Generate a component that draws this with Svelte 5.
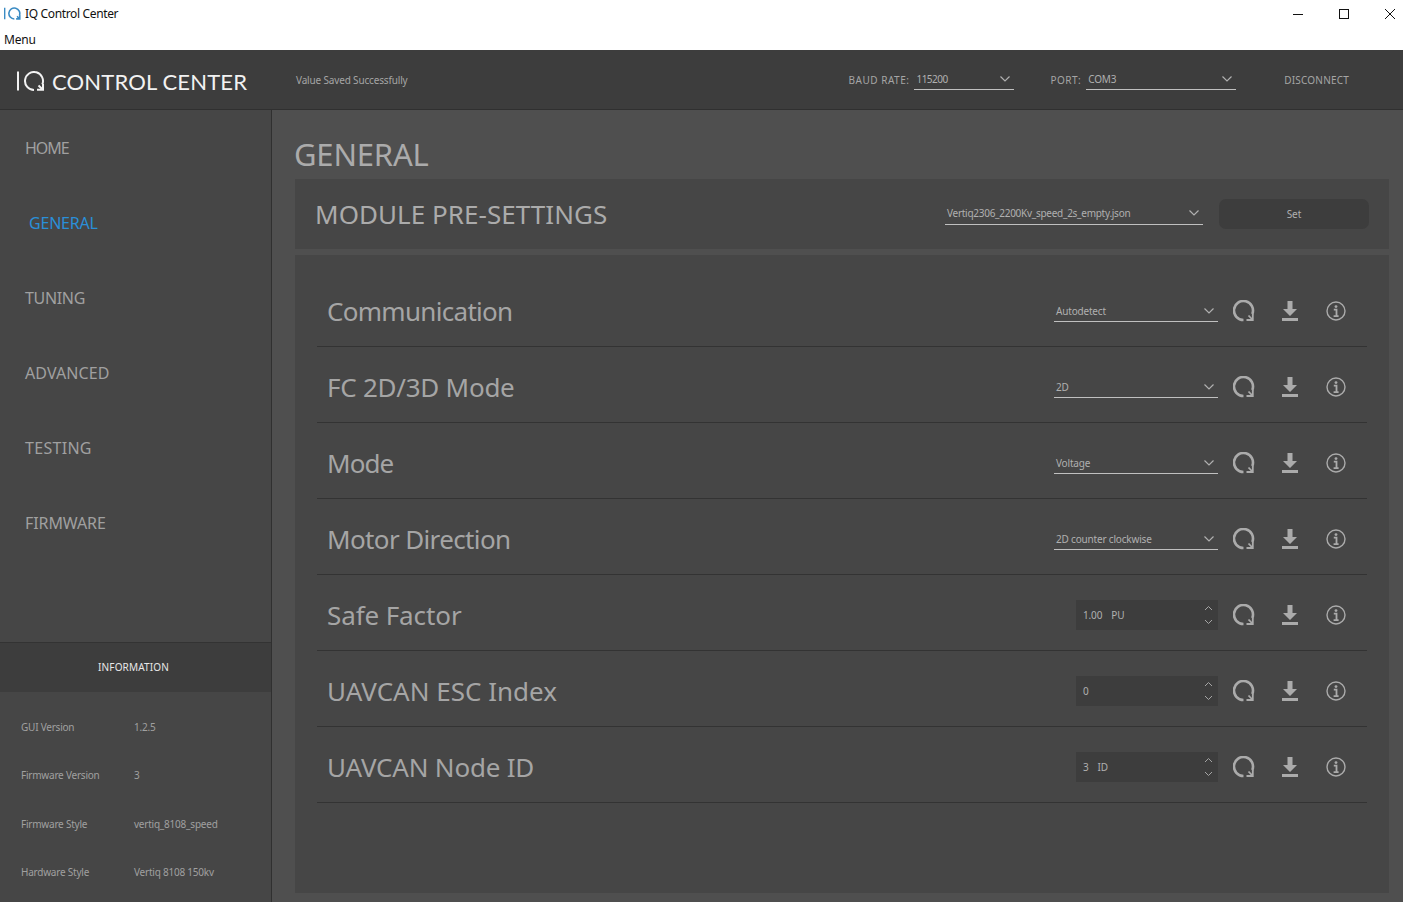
<script>
    // tracking values keep the label widths in line with the original UI font
    const navItems = [
        { name: "HOME", track: -1 },
        { name: "GENERAL", track: -0.2 },
        { name: "TUNING", track: -0.33 },
        { name: "ADVANCED", track: 0.1 },
        { name: "TESTING", track: 0.3 },
        { name: "FIRMWARE", track: -0.1 }
    ];
    const info = [
        ["GUI Version", "1.2.5"],
        ["Firmware Version", "3"],
        ["Firmware Style", "vertiq_8108_speed"],
        ["Hardware Style", "Vertiq 8108 150kv"]
    ];
    const rows = [
        { label: "Communication", track: -0.7, kind: "select", value: "Autodetect" },
        { label: "FC 2D/3D Mode", track: -0.25, kind: "select", value: "2D" },
        { label: "Mode", track: -0.9, kind: "select", value: "Voltage" },
        { label: "Motor Direction", track: -0.63, kind: "select", value: "2D counter clockwise" },
        { label: "Safe Factor", track: -0.1, kind: "spin", value: "1.00", unit: "PU" },
        { label: "UAVCAN ESC Index", track: 0, kind: "spin", value: "0" },
        { label: "UAVCAN Node ID", track: -0.2, kind: "spin", value: "3", unit: "ID" }
    ];
</script>

{#snippet chevron()}
    <svg class="chevron" width="12" height="8" viewBox="0 0 12 8"><path d="M1.5 1.5 L6 6 L10.5 1.5" /></svg>
{/snippet}

{#snippet logo(w, h)}
    <svg width={w} height={h} viewBox="0 0 28 20">
        <path d="M1 0.5 V19.5" />
        <path d="M17 19 A9 9 0 1 1 25.3 13.5" />
        <path d="M21.5 14.5 L26 18.8 M26 13 V18.8 H20" />
    </svg>
{/snippet}

<div class="window">
    <div class="titlebar">
        <span class="title-logo">{@render logo(17, 13)}</span>
        <span class="title-text">IQ Control Center</span>
        <div class="window-buttons">
            <svg width="12" height="12" viewBox="0 0 12 12"><path d="M1 6.5 H11" /></svg>
            <svg width="12" height="12" viewBox="0 0 12 12"><rect x="1.5" y="1.5" width="9" height="9" /></svg>
            <svg width="12" height="12" viewBox="0 0 12 12"><path d="M1 1 L11 11 M11 1 L1 11" /></svg>
        </div>
    </div>
    <div class="menubar">Menu</div>

    <header class="topbar">
        <div class="brand">
            <span class="brand-logo">{@render logo(28, 20)}</span>
            <span class="brand-text">CONTROL CENTER</span>
        </div>
        <div class="status">Value Saved Successfully</div>
        <div class="conn">
            <span class="conn-label baud">BAUD RATE:</span>
            <div class="select baud-select"><span>115200</span>{@render chevron()}</div>
            <span class="conn-label port">PORT:</span>
            <div class="select port-select"><span>COM3</span>{@render chevron()}</div>
            <span class="disconnect">DISCONNECT</span>
        </div>
    </header>

    <div class="body">
        <aside class="sidebar">
            <nav class="nav">
                {#each navItems as item}
                    <div class="nav-item" class:active={item.name === "GENERAL"} style="letter-spacing: {item.track}px">{item.name}</div>
                {/each}
            </nav>
            <div class="info-head">INFORMATION</div>
            <div class="info-list">
                {#each info as [k, v]}
                    <div class="info-row"><span class="info-key">{k}</span><span>{v}</span></div>
                {/each}
            </div>
        </aside>

        <main class="main">
            <h1>GENERAL</h1>
            <section class="presets">
                <h2>MODULE PRE-SETTINGS</h2>
                <div class="select preset-select"><span>Vertiq2306_2200Kv_speed_2s_empty.json</span>{@render chevron()}</div>
                <div class="set-btn">Set</div>
            </section>
            <section class="panel">
                {#each rows as row}
                    <div class="row">
                        <div class="row-label" style="letter-spacing: {row.track}px">{row.label}</div>
                        {#if row.kind === "select"}
                            <div class="select row-select"><span>{row.value}</span>{@render chevron()}</div>
                        {:else}
                            <div class="spin">
                                <span class="spin-value">{row.value}</span>
                                {#if row.unit}<span class="spin-unit">{row.unit}</span>{/if}
                                <div class="spin-arrows">
                                    <svg width="9" height="6" viewBox="0 0 9 6"><path d="M1 5 L4.5 1.5 L8 5" /></svg>
                                    <svg width="9" height="6" viewBox="0 0 9 6"><path d="M1 1 L4.5 4.5 L8 1" /></svg>
                                </div>
                            </div>
                        {/if}
                        <div class="actions">
                            <svg class="act" width="22" height="22" viewBox="0 0 22 22">
                                <path class="thick" d="M10.5 20 A9.5 9.5 0 1 1 19.3 14" />
                                <path class="mid" d="M15.5 15.5 L19.8 20 M19.8 14 V20 H13.5" />
                            </svg>
                            <svg class="act" width="18" height="22" viewBox="0 0 18 22">
                                <path class="solid" d="M6.5 1 H11.5 V9 H16 L9 16 L2 9 H6.5 Z" />
                                <rect class="solid" x="1" y="18" width="16" height="3" />
                            </svg>
                            <svg class="act" width="20" height="20" viewBox="0 0 20 20">
                                <circle cx="10" cy="10" r="9" />
                                <circle class="solid" cx="10" cy="5.6" r="1.4" />
                                <path class="mid" d="M7.8 8.6 H10.5 V15 M7.6 15.2 H12.6" />
                            </svg>
                        </div>
                    </div>
                {/each}
            </section>
        </main>
    </div>
</div>

<style>
    :global(body) {
        margin: 0;
        background: #4f4f4f;
    }

    .window {
        width: 1403px;
        height: 902px;
        overflow: hidden;
        display: flex;
        flex-direction: column;
        font-family: "Noto Sans", "Open Sans", sans-serif;
        color: #ababab;
    }

    .titlebar {
        height: 26px;
        background: #fff;
        display: flex;
        align-items: center;
        padding-left: 4px;
        color: #111;
        font-size: 12px;
    }

    .title-logo {
        display: flex;
        margin-right: 4px;
        padding-top: 1px;
    }

    .title-logo svg {
        fill: none;
        stroke: #3b8cc4;
        stroke-width: 2.6;
    }

    .title-text {
        letter-spacing: -0.35px;
    }

    .window-buttons {
        margin-left: auto;
        display: flex;
        gap: 34px;
        margin-right: 7px;
        padding-top: 1px;
    }

    .window-buttons svg {
        fill: none;
        stroke: #111;
        stroke-width: 1;
    }

    .menubar {
        height: 24px;
        background: #fff;
        color: #111;
        font-size: 12px;
        padding-left: 4px;
        line-height: 27px;
        letter-spacing: -0.2px;
    }

    .topbar {
        height: 59px;
        background: #3d3d3d;
        border-bottom: 1px solid #303030;
        display: flex;
        align-items: center;
        flex: none;
    }

    .brand {
        width: 296px;
        padding-left: 17px;
        box-sizing: border-box;
        display: flex;
        align-items: center;
        color: #f2f2f2;
    }

    .brand-logo {
        display: flex;
        margin-right: 7px;
        margin-top: 2px;
    }

    .brand-logo svg {
        fill: none;
        stroke: #f2f2f2;
        stroke-width: 2;
    }

    .brand-text {
        font-family: Lato, sans-serif;
        font-size: 22px;
        padding-top: 3px;
        letter-spacing: 0.15px;
    }

    .status {
        font-size: 10px;
        color: #a5a5a5;
        letter-spacing: -0.16px;
    }

    .conn {
        margin-left: auto;
        display: flex;
        align-items: center;
        font-size: 10px;
        color: #a5a5a5;
    }

    .conn-label {
        letter-spacing: 0.5px;
    }

    .conn-label.baud {
        margin-right: 5px;
    }

    .conn-label.port {
        margin-left: 36px;
        margin-right: 5px;
    }

    .disconnect {
        margin-left: 48px;
        margin-right: 54px;
        letter-spacing: 0.2px;
    }

    .select {
        display: flex;
        align-items: center;
        justify-content: space-between;
        border-bottom: 1px solid #c0c0c0;
        box-sizing: border-box;
        font-size: 10px;
        color: #b0b0b0;
        padding: 0 3px 0 2px;
    }

    .select span {
        letter-spacing: -0.18px;
    }

    .chevron {
        fill: none;
        stroke: #b0b0b0;
        stroke-width: 1.2;
    }

    .baud-select {
        width: 100px;
        height: 20px;
    }

    .baud-select span {
        letter-spacing: -0.5px;
    }

    .port-select {
        width: 150px;
        height: 20px;
    }

    .body {
        flex: 1;
        display: flex;
        min-height: 0;
    }

    .sidebar {
        width: 271px;
        flex: none;
        background: #464646;
        border-right: 1px solid #303030;
        display: flex;
        flex-direction: column;
    }

    .nav {
        flex: 1;
        padding-top: 1px;
    }

    .nav-item {
        height: 75px;
        line-height: 75px;
        padding-left: 25px;
        font-size: 16px;
        color: #a0a0a0;
    }

    .nav-item.active {
        color: #2a8fd8;
        padding-left: 29px;
    }

    .info-head {
        height: 49px;
        background: #3d3d3d;
        border-top: 1px solid #333;
        text-align: center;
        line-height: 49px;
        font-size: 10px;
        color: #e8e8e8;
        padding-right: 4px;
        letter-spacing: 0.15px;
    }

    .info-list {
        height: 210px;
        padding-top: 10.4px;
        box-sizing: border-box;
    }

    .info-row {
        height: 48.6px;
        display: flex;
        align-items: center;
        padding-left: 21px;
        font-size: 10px;
        color: #a0a0a0;
        letter-spacing: -0.22px;
    }

    .info-key {
        width: 113px;
    }

    .main {
        flex: 1;
        padding: 0 14px 9px 23px;
        display: flex;
        flex-direction: column;
        min-width: 0;
    }

    h1 {
        margin: 0 0 0 -1px;
        height: 69px;
        line-height: 88px;
        font-size: 31px;
        font-weight: 400;
        color: #ababab;
        flex: none;
        letter-spacing: -0.2px;
    }

    .presets {
        height: 70px;
        background: #464646;
        display: flex;
        align-items: center;
        padding: 0 20px;
        margin-bottom: 6px;
        flex: none;
    }

    h2 {
        margin: 0;
        font-size: 26px;
        font-weight: 400;
        color: #ababab;
        margin-right: auto;
        letter-spacing: 0.05px;
    }

    .preset-select {
        width: 258px;
        height: 22px;
        margin-right: 16px;
        padding-bottom: 2px;
    }

    .preset-select span {
        letter-spacing: -0.27px;
    }

    .set-btn {
        width: 150px;
        height: 30px;
        line-height: 30px;
        background: #3d3d3d;
        border-radius: 7px;
        text-align: center;
        font-size: 10px;
        color: #b0b0b0;
    }

    .panel {
        flex: 1;
        background: #464646;
        padding: 16px 22px 0;
    }

    .row {
        height: 70px;
        border-bottom: 1px solid #333;
        display: flex;
        align-items: center;
        padding: 5px 0 0 10px;
    }

    .row-label {
        font-size: 26px;
        color: #a5a5a5;
        margin-right: auto;
    }

    .row-select {
        width: 164px;
        height: 22px;
    }

    .spin {
        width: 142px;
        height: 30px;
        background: #3d3d3d;
        display: flex;
        align-items: center;
        padding: 0 5px 0 7px;
        box-sizing: border-box;
        font-size: 10px;
        color: #b0b0b0;
        letter-spacing: -0.15px;
    }

    .spin-unit {
        margin-left: 9px;
    }

    .spin-arrows {
        margin-left: auto;
        display: flex;
        flex-direction: column;
        gap: 8px;
    }

    .spin-arrows svg {
        fill: none;
        stroke: #a5a5a5;
        stroke-width: 1;
    }

    .actions {
        width: 149px;
        display: flex;
        align-items: center;
    }

    .act {
        fill: none;
        stroke: #ababab;
        stroke-width: 1.4;
        flex: none;
    }

    .act:nth-child(1) {
        margin-left: 15px;
    }

    .act:nth-child(2) {
        margin-left: 26px;
    }

    .act:nth-child(3) {
        margin-left: 27px;
    }

    .thick {
        stroke-width: 2.6;
    }

    .mid {
        stroke-width: 1.8;
    }

    .solid {
        fill: #ababab;
        stroke: none;
    }
</style>
